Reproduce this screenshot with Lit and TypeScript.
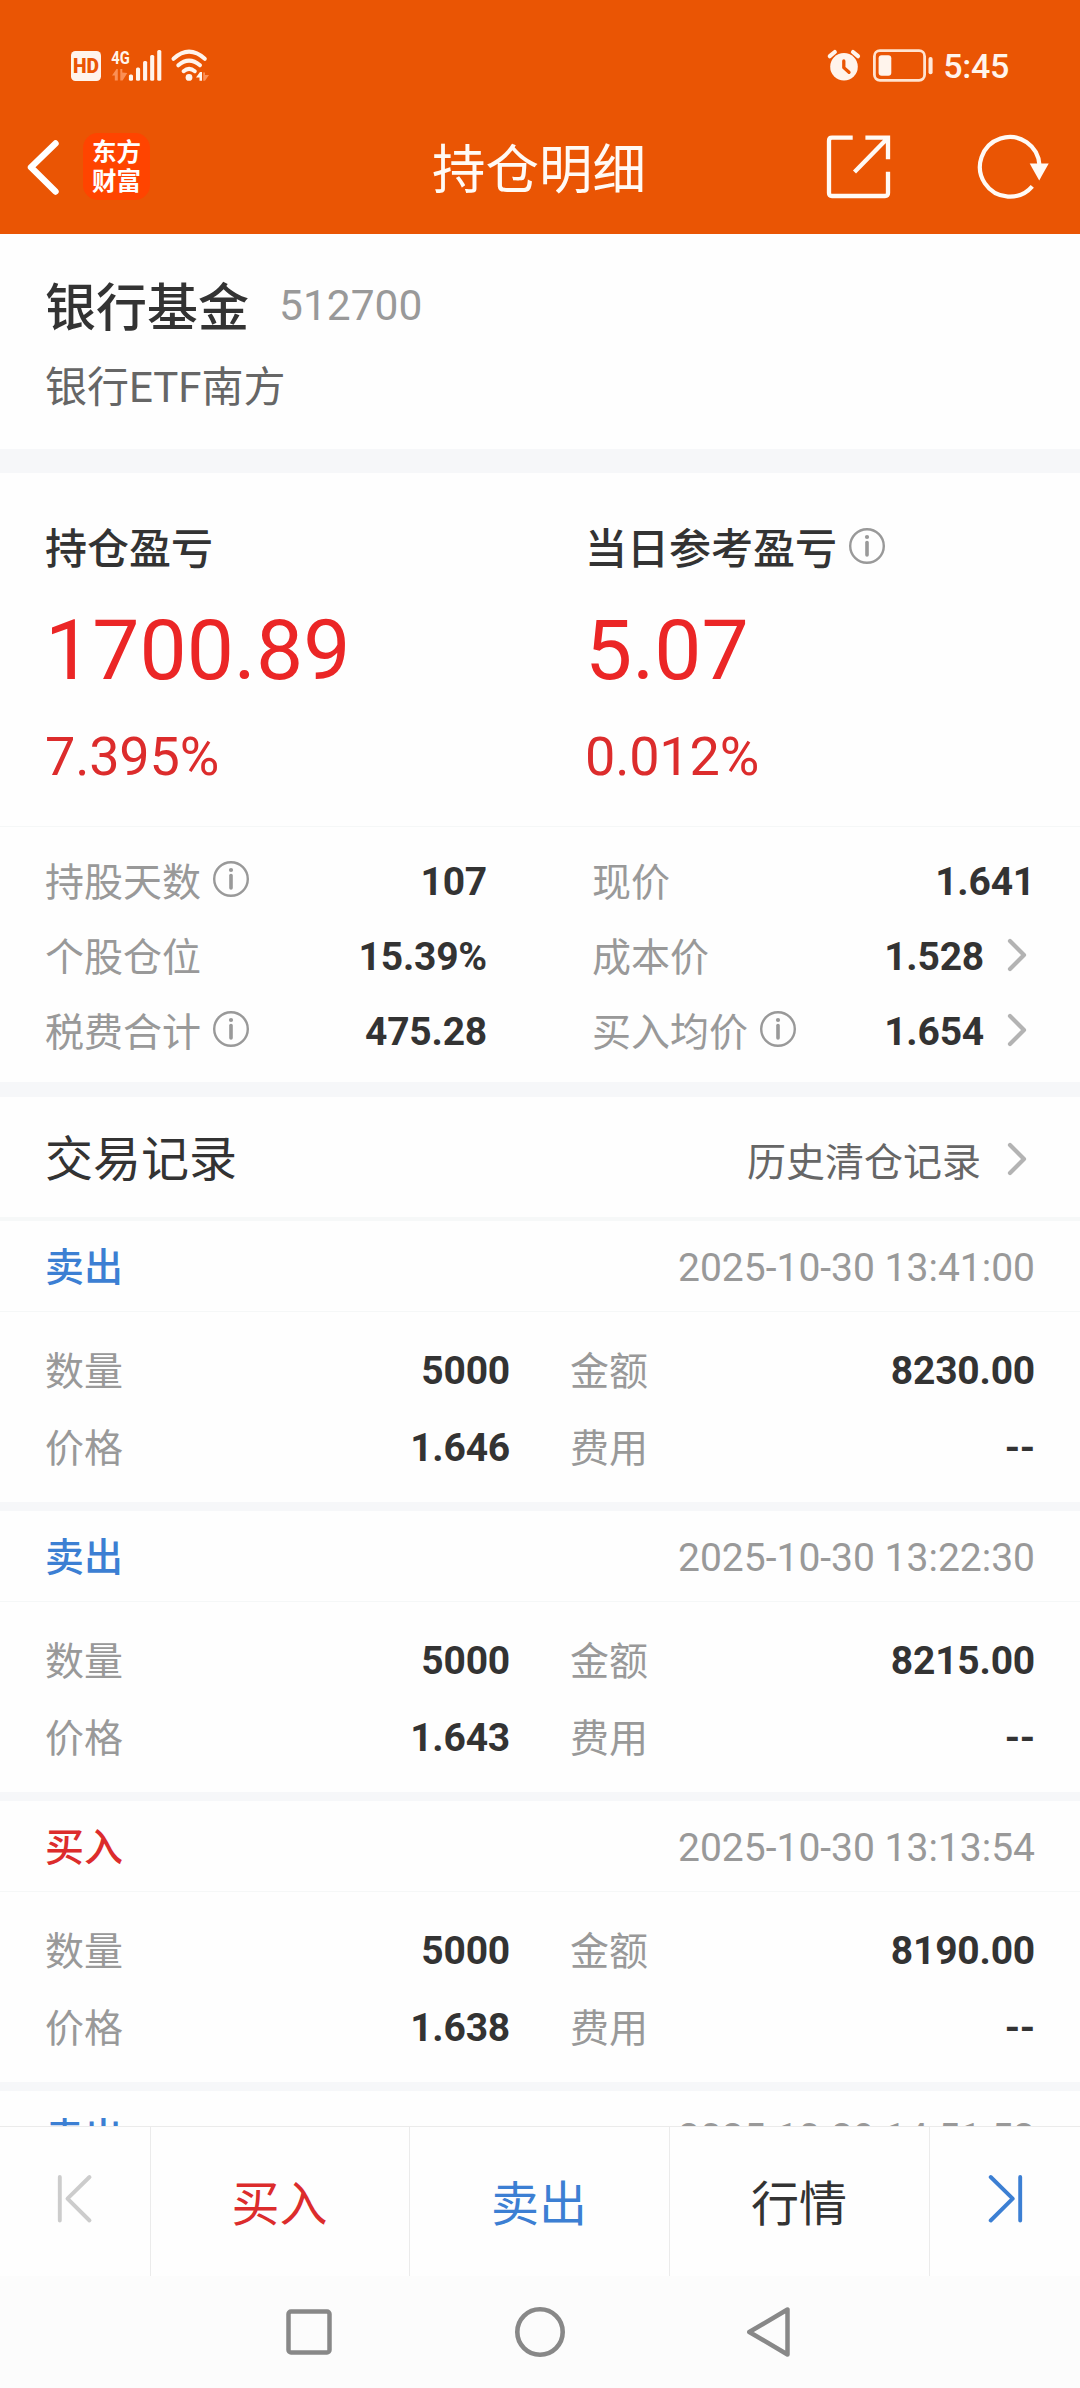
import { LitElement, html, css, svg, nothing } from "lit";
import { customElement, property } from "lit/decorators.js";
import { classMap } from "lit/directives/class-map.js";

type Side = "buy" | "sell";

interface TradeDetail {
  qty: string;
  amount: string;
  price: string;
  fee: string;
}

interface Trade {
  side: Side;
  time: string;
  detail?: TradeDetail;
}

interface Stat {
  label: string;
  value: string;
  info?: boolean;
  link?: boolean;
}

const TRADES: Trade[] = [
  { side: "sell", time: "2025-10-30 13:41:00", detail: { qty: "5000", amount: "8230.00", price: "1.646", fee: "--" } },
  { side: "sell", time: "2025-10-30 13:22:30", detail: { qty: "5000", amount: "8215.00", price: "1.643", fee: "--" } },
  { side: "buy", time: "2025-10-30 13:13:54", detail: { qty: "5000", amount: "8190.00", price: "1.638", fee: "--" } },
  { side: "sell", time: "2025-10-29 14:51:52" },
];

const LEFT_STATS: Stat[] = [
  { label: "持股天数", value: "107", info: true },
  { label: "个股仓位", value: "15.39%" },
  { label: "税费合计", value: "475.28", info: true },
];

const RIGHT_STATS: Stat[] = [
  { label: "现价", value: "1.641" },
  { label: "成本价", value: "1.528", link: true },
  { label: "买入均价", value: "1.654", info: true, link: true },
];

const infoIcon = html`<svg class="info" width="38" height="38" viewBox="0 0 38 38" fill="none">
  <circle cx="19" cy="19" r="16.8" stroke="#999" stroke-width="2.4" />
  <circle cx="19" cy="10" r="2.1" fill="#999" />
  <path d="M19 15.6V28" stroke="#999" stroke-width="3.6" stroke-linecap="round" />
</svg>`;

const chevron = html`<svg class="chevron" width="22" height="36" viewBox="0 0 22 36" fill="none">
  <path d="M4 4L18 18L4 32" stroke="#b3b3b3" stroke-width="4.2" stroke-linecap="round" stroke-linejoin="round" />
</svg>`;

@customElement("status-bar")
export class StatusBar extends LitElement {
  static styles = css`
    :host {
      display: flex;
      justify-content: space-between;
      height: 102px;
      padding: 30px 71px 0 70px;
      box-sizing: border-box;
      color: #fff4ec;
      font-family: Roboto, sans-serif;
    }
    .group {
      display: flex;
      align-items: center;
      height: 72px;
    }
    .clock {
      margin-left: 9px;
      font-size: 34px;
      line-height: 42px;
      font-weight: 500;
      letter-spacing: -0.3px;
    }
    .tiny {
      font: 700 19px Roboto, sans-serif;
    }
    .hd {
      font: 900 21px Roboto, sans-serif;
    }
  `;

  render() {
    const bars = [74.5, 67.5, 61, 55, 50];
    return html`
      <div class="group">
        <svg width="142" height="52" viewBox="70 40 142 52" fill="#fff4ec">
          <rect x="71" y="51" width="30" height="30" rx="4.5" />
          <text class="hd" x="73" y="73.4" fill="#ea5504" textLength="26" lengthAdjust="spacingAndGlyphs">HD</text>
          <text class="tiny" x="111.3" y="63.6" textLength="18.5" lengthAdjust="spacingAndGlyphs">4G</text>
          <path d="M112 75.5l4.5-6.5h1.3v11.5h-3v-5z M120.3 69h2v3.500l5 .5l-4.700 7.500h-2.300z" fill="#fb8f55" />
          ${bars.map((y, i) => svg`<rect x=${128.9 + i * 7.08} y=${y} width="4.1" height=${80.7 - y} rx="1.5" />`)}
          <g fill="none" stroke="#fff4ec" stroke-width="4" stroke-linecap="round">
            <path d="M173.5 58.8Q189 44.6 204.8 58.8" />
            <path d="M178.3 65.3Q189 55.8 200 65.3" />
            <path d="M183.6 71.2Q189 66.6 194.8 71.2" />
          </g>
          <circle cx="189" cy="77.4" r="3.4" />
          <path d="M196 77.500l4-5.500h2v8.800h-2.500v-3.300z" />
          <path d="M203.2 72.500h1.800v2.500h4l-4 5.800h-1.800z" fill="#fb8f55" />
        </svg>
      </div>
      <div class="group">
        <svg width="108" height="36" viewBox="827 48 108 36" fill="#fff4ec">
          <circle cx="845" cy="66.8" r="13.8" />
          <path d="M830.8 56.2l5-4.200M859 56.200l-5-4.200" stroke="#fff4ec" stroke-width="4.2" stroke-linecap="round" />
          <path d="M844.8 61v6.600l5.200 4.700" fill="none" stroke="#ea5504" stroke-width="3.3" stroke-linecap="round" stroke-linejoin="round" />
          <rect x="875.4" y="50.7" width="50.2" height="29.6" rx="5.5" fill="none" stroke="#ffe3d0" stroke-width="2.8" />
          <rect x="879.6" y="55.3" width="12.7" height="20.4" rx="3" />
          <rect x="929.5" y="57" width="4.1" height="17.3" rx="2" fill="#ffe9da" />
        </svg>
        <span class="clock">5:45</span>
      </div>
    `;
  }
}

@customElement("title-bar")
export class TitleBar extends LitElement {
  static styles = css`
    :host {
      display: grid;
      grid-template-columns: 300px 1fr 300px;
      align-items: center;
      height: 132px;
      color: #fffaf5;
      font-family: Roboto, "Noto Sans CJK SC", sans-serif;
    }
    .left,
    .right {
      display: flex;
      align-items: center;
      height: 130px;
      padding-bottom: 3px;
      box-sizing: border-box;
    }
    .left {
      padding-left: 24px;
      gap: 21px;
    }
    .right {
      justify-content: flex-end;
      padding-right: 30px;
      gap: 85px;
    }
    .logo {
      display: flex;
      flex-direction: column;
      align-items: center;
      justify-content: center;
      width: 67px;
      height: 67px;
      border-radius: 15px;
      background: #ff4400;
      color: #fff;
      font-size: 24.5px;
      font-weight: 700;
      line-height: 29px;
    }
    .title {
      padding: 5px 2px 0 0;
      text-align: center;
      font-size: 53.5px;
      line-height: 60px;
    }
  `;

  render() {
    return html`
      <div class="left">
        <svg width="38" height="60" viewBox="24 136 38 60" fill="none">
          <path d="M55.5 142.500L31 166.300L55.500 190.500" stroke="#fff" stroke-width="6.4" stroke-linecap="round" stroke-linejoin="round" />
        </svg>
        <div class="logo"><span>东方</span><span>财富</span></div>
      </div>
      <div class="title">持仓明细</div>
      <div class="right">
        <svg width="66" height="66" viewBox="826 133.5 66 66" fill="none" stroke="#fffaf5" stroke-width="4.3">
          <path d="M853.7 137.200H833Q830 137.200 830 140.200V192.500Q830 195.500 833 195.500H886Q889 195.500 889 192.500V171.300" />
          <path d="M866.4 137.200H889V158.700M889 137.200L855.500 171.500" />
        </svg>
        <svg width="74" height="66" viewBox="977 133.5 74 66" fill="none">
          <path d="M1040.5 165A29.800 29.800 0 1 0 1033.300 185.800" stroke="#fffaf5" stroke-width="4.2" />
          <path d="M1030.7 163h19l-9.500 17z" fill="#fffaf5" />
        </svg>
      </div>
    `;
  }
}

@customElement("stat-row")
export class StatRow extends LitElement {
  @property({ attribute: false }) stat!: Stat;

  static styles = css`
    :host {
      display: flex;
      align-items: center;
      justify-content: space-between;
      height: 75px;
      font-size: 39px;
      line-height: 48px;
    }
    .label,
    .value {
      display: flex;
      align-items: center;
    }
    .label {
      gap: 11px;
      color: #999;
    }
    .info {
      margin-bottom: 7px;
    }
    .value {
      gap: 22px;
      padding-bottom: 1px;
      color: #333;
      font-weight: 700;
      letter-spacing: -0.2px;
    }
    .chevron {
      margin: 0 7px 5px 0;
    }
  `;

  render() {
    const { label, value, info, link } = this.stat;
    return html`
      <span class="label">${label}${info ? infoIcon : nothing}</span>
      <span class="value">${value}${link ? chevron : nothing}</span>
    `;
  }
}

@customElement("trade-card")
export class TradeCard extends LitElement {
  @property({ attribute: false }) trade!: Trade;

  static styles = css`
    :host {
      display: block;
      flex: none;
      background: #fefefe;
      font-size: 39px;
      line-height: 48px;
      border-bottom: 9px solid #f6f7f9;
    }
    .head {
      display: flex;
      align-items: center;
      justify-content: space-between;
      height: 91px;
      padding: 3px 45px 0;
      box-sizing: border-box;
      border-bottom: 1px solid #f5f7f7;
    }
    .side {
      padding-top: 1px;
      font-weight: 500;
    }
    .buy {
      color: #dc2c2c;
    }
    .sell {
      color: #3c7fd3;
    }
    .time,
    .key {
      color: #999;
    }
    .key {
      padding-top: 2px;
    }
    .body {
      display: grid;
      grid-template-columns: 465px 465px;
      column-gap: 60px;
      padding: 20px 45px 16px;
    }
    .cell {
      display: flex;
      align-items: center;
      justify-content: space-between;
      height: 77px;
    }
    .num {
      color: #333;
      font-weight: 700;
      letter-spacing: -0.2px;
    }
  `;

  private cell(key: string, num: string) {
    return html`<div class="cell"><span class="key">${key}</span><span class="num">${num}</span></div>`;
  }

  private body(d: TradeDetail) {
    return html`<div class="body">
      ${this.cell("数量", d.qty)} ${this.cell("金额", d.amount)} ${this.cell("价格", d.price)} ${this.cell("费用", d.fee)}
    </div>`;
  }

  render() {
    const t = this.trade;
    return html`
      <div class="head">
        <span class=${classMap({ side: true, buy: t.side === "buy", sell: t.side === "sell" })}
          >${t.side === "buy" ? "买入" : "卖出"}</span
        >
        <span class="time">${t.time}</span>
      </div>
      ${t.detail ? this.body(t.detail) : nothing}
    `;
  }
}

@customElement("app-root")
export class AppRoot extends LitElement {
  static styles = css`
    :host {
      display: flex;
      flex-direction: column;
      height: 2388px;
      overflow: hidden;
      background: #fefefe;
      color: #333;
      font-family: Roboto, "Noto Sans CJK SC", sans-serif;
    }
    .top {
      flex: none;
      background: #ea5504;
    }
    .content {
      flex: 1;
      min-height: 0;
      overflow: hidden;
      display: flex;
      flex-direction: column;
    }
    .fund {
      flex: none;
      height: 215px;
      padding: 45px 45px 0;
      box-sizing: border-box;
    }
    .fund-line {
      display: flex;
      align-items: center;
      gap: 30px;
      height: 60px;
    }
    .fund-name {
      font-size: 51px;
      line-height: 60px;
      font-weight: 500;
    }
    .fund-code {
      padding-bottom: 6px;
      font-size: 42.5px;
      line-height: 48px;
      color: #999;
    }
    .fund-full {
      margin-top: 24px;
      font-size: 42px;
      line-height: 50px;
      color: #666;
    }
    .band {
      flex: none;
      height: 24px;
      background: #f6f7f9;
    }
    .band.slim {
      height: 15px;
    }
    .profit {
      flex: none;
      display: grid;
      grid-template-columns: 540px 1fr;
      height: 354px;
      padding-top: 52px;
      box-sizing: border-box;
      border-bottom: 1px solid #f5f7f7;
    }
    .pl {
      padding-left: 45px;
    }
    .pl-name {
      display: flex;
      align-items: center;
      gap: 11px;
      font-size: 42px;
      line-height: 50px;
      height: 50px;
      font-weight: 500;
    }
    .pl-name .info {
      margin-bottom: 8px;
    }
    .pl-big {
      margin-top: 31px;
      font-size: 84px;
      line-height: 90px;
      color: #eb2626;
    }
    .pl-rate {
      margin-top: 31px;
      font-size: 54px;
      line-height: 60px;
      letter-spacing: -0.2px;
      color: #dc2c2c;
    }
    .stats {
      flex: none;
      display: grid;
      grid-template-columns: 442px 443px;
      column-gap: 105px;
      height: 255px;
      padding: 18px 45px 0;
      box-sizing: border-box;
    }
    .section-head {
      flex: none;
      display: flex;
      align-items: center;
      justify-content: space-between;
      height: 124px;
      padding: 6px 52px 0 45px;
      box-sizing: border-box;
      border-bottom: 4px solid #f6f8f8;
    }
    .section-title {
      font-size: 48px;
      line-height: 56px;
    }
    .history {
      display: flex;
      align-items: center;
      gap: 25px;
      padding-top: 5px;
      font-size: 39px;
      line-height: 48px;
      color: #666;
    }
    .history .chevron {
      margin-bottom: 8px;
    }
    .actions {
      flex: none;
      display: grid;
      grid-template-columns: 151px 259px 260px 260px 150px;
      height: 150px;
      box-sizing: border-box;
      border-top: 1px solid #ebebeb;
    }
    .action {
      display: flex;
      align-items: center;
      justify-content: center;
      padding: 7px 1px 0 0;
      font-size: 48px;
      line-height: 56px;
      border-right: 1px solid #ebebeb;
    }
    .action.step {
      padding: 0 0 5px;
    }
    .action:last-child {
      border-right: 0;
    }
    .buy {
      color: #dc2c2c;
    }
    .sell {
      color: #3c7fd3;
    }
    .nav {
      flex: none;
      display: grid;
      grid-template-columns: 54px 54px 54px;
      column-gap: 177px;
      align-content: center;
      height: 112px;
      padding-left: 282px;
      background: #fcfcfc;
    }
  `;

  private stats(list: Stat[]) {
    return html`<div>${list.map((s) => html`<stat-row .stat=${s}></stat-row>`)}</div>`;
  }

  render() {
    return html`
      <div class="top">
        <status-bar></status-bar>
        <title-bar></title-bar>
      </div>

      <div class="content">
        <section class="fund">
          <div class="fund-line">
            <span class="fund-name">银行基金</span>
            <span class="fund-code">512700</span>
          </div>
          <div class="fund-full">银行ETF南方</div>
        </section>
        <div class="band"></div>

        <section class="profit">
          <div class="pl">
            <div class="pl-name">持仓盈亏</div>
            <div class="pl-big">1700.89</div>
            <div class="pl-rate">7.395%</div>
          </div>
          <div class="pl">
            <div class="pl-name">当日参考盈亏${infoIcon}</div>
            <div class="pl-big">5.07</div>
            <div class="pl-rate">0.012%</div>
          </div>
        </section>

        <section class="stats">${this.stats(LEFT_STATS)} ${this.stats(RIGHT_STATS)}</section>
        <div class="band slim"></div>

        <div class="section-head">
          <span class="section-title">交易记录</span>
          <span class="history">历史清仓记录${chevron}</span>
        </div>
        ${TRADES.map((t) => html`<trade-card .trade=${t}></trade-card>`)}
      </div>

      <div class="actions">
        <div class="action step">
          <svg width="40" height="52" viewBox="56 2174 40 52" fill="none" stroke="#ccc" stroke-width="3.9" stroke-linecap="round" stroke-linejoin="round">
            <path d="M60.8 2178V2221.500M90.500 2178L68.500 2199.700L90.500 2221.500" />
          </svg>
        </div>
        <div class="action buy">买入</div>
        <div class="action sell">卖出</div>
        <div class="action">行情</div>
        <div class="action step">
          <svg width="40" height="52" viewBox="985 2174 40 52" fill="none" stroke="#3c7fd3" stroke-width="3.9" stroke-linecap="round" stroke-linejoin="round">
            <path d="M1020.2 2178V2221.500M990.700 2178L1012.700 2199.700L990.700 2221.500" />
          </svg>
        </div>
      </div>

      <div class="nav">
        <svg width="54" height="54" viewBox="0 0 54 54" fill="none" stroke="#888" stroke-width="4.5">
          <rect x="6.5" y="6.5" width="41" height="41" rx="2.5" />
        </svg>
        <svg width="54" height="54" viewBox="0 0 54 54" fill="none" stroke="#888" stroke-width="4.6">
          <circle cx="27" cy="27" r="22.7" />
        </svg>
        <svg width="54" height="54" viewBox="0 0 54 54" fill="none" stroke="#888" stroke-width="4.5" stroke-linejoin="round">
          <path d="M43.5 4.500V49.500L5.300 27z" />
        </svg>
      </div>
    `;
  }
}
